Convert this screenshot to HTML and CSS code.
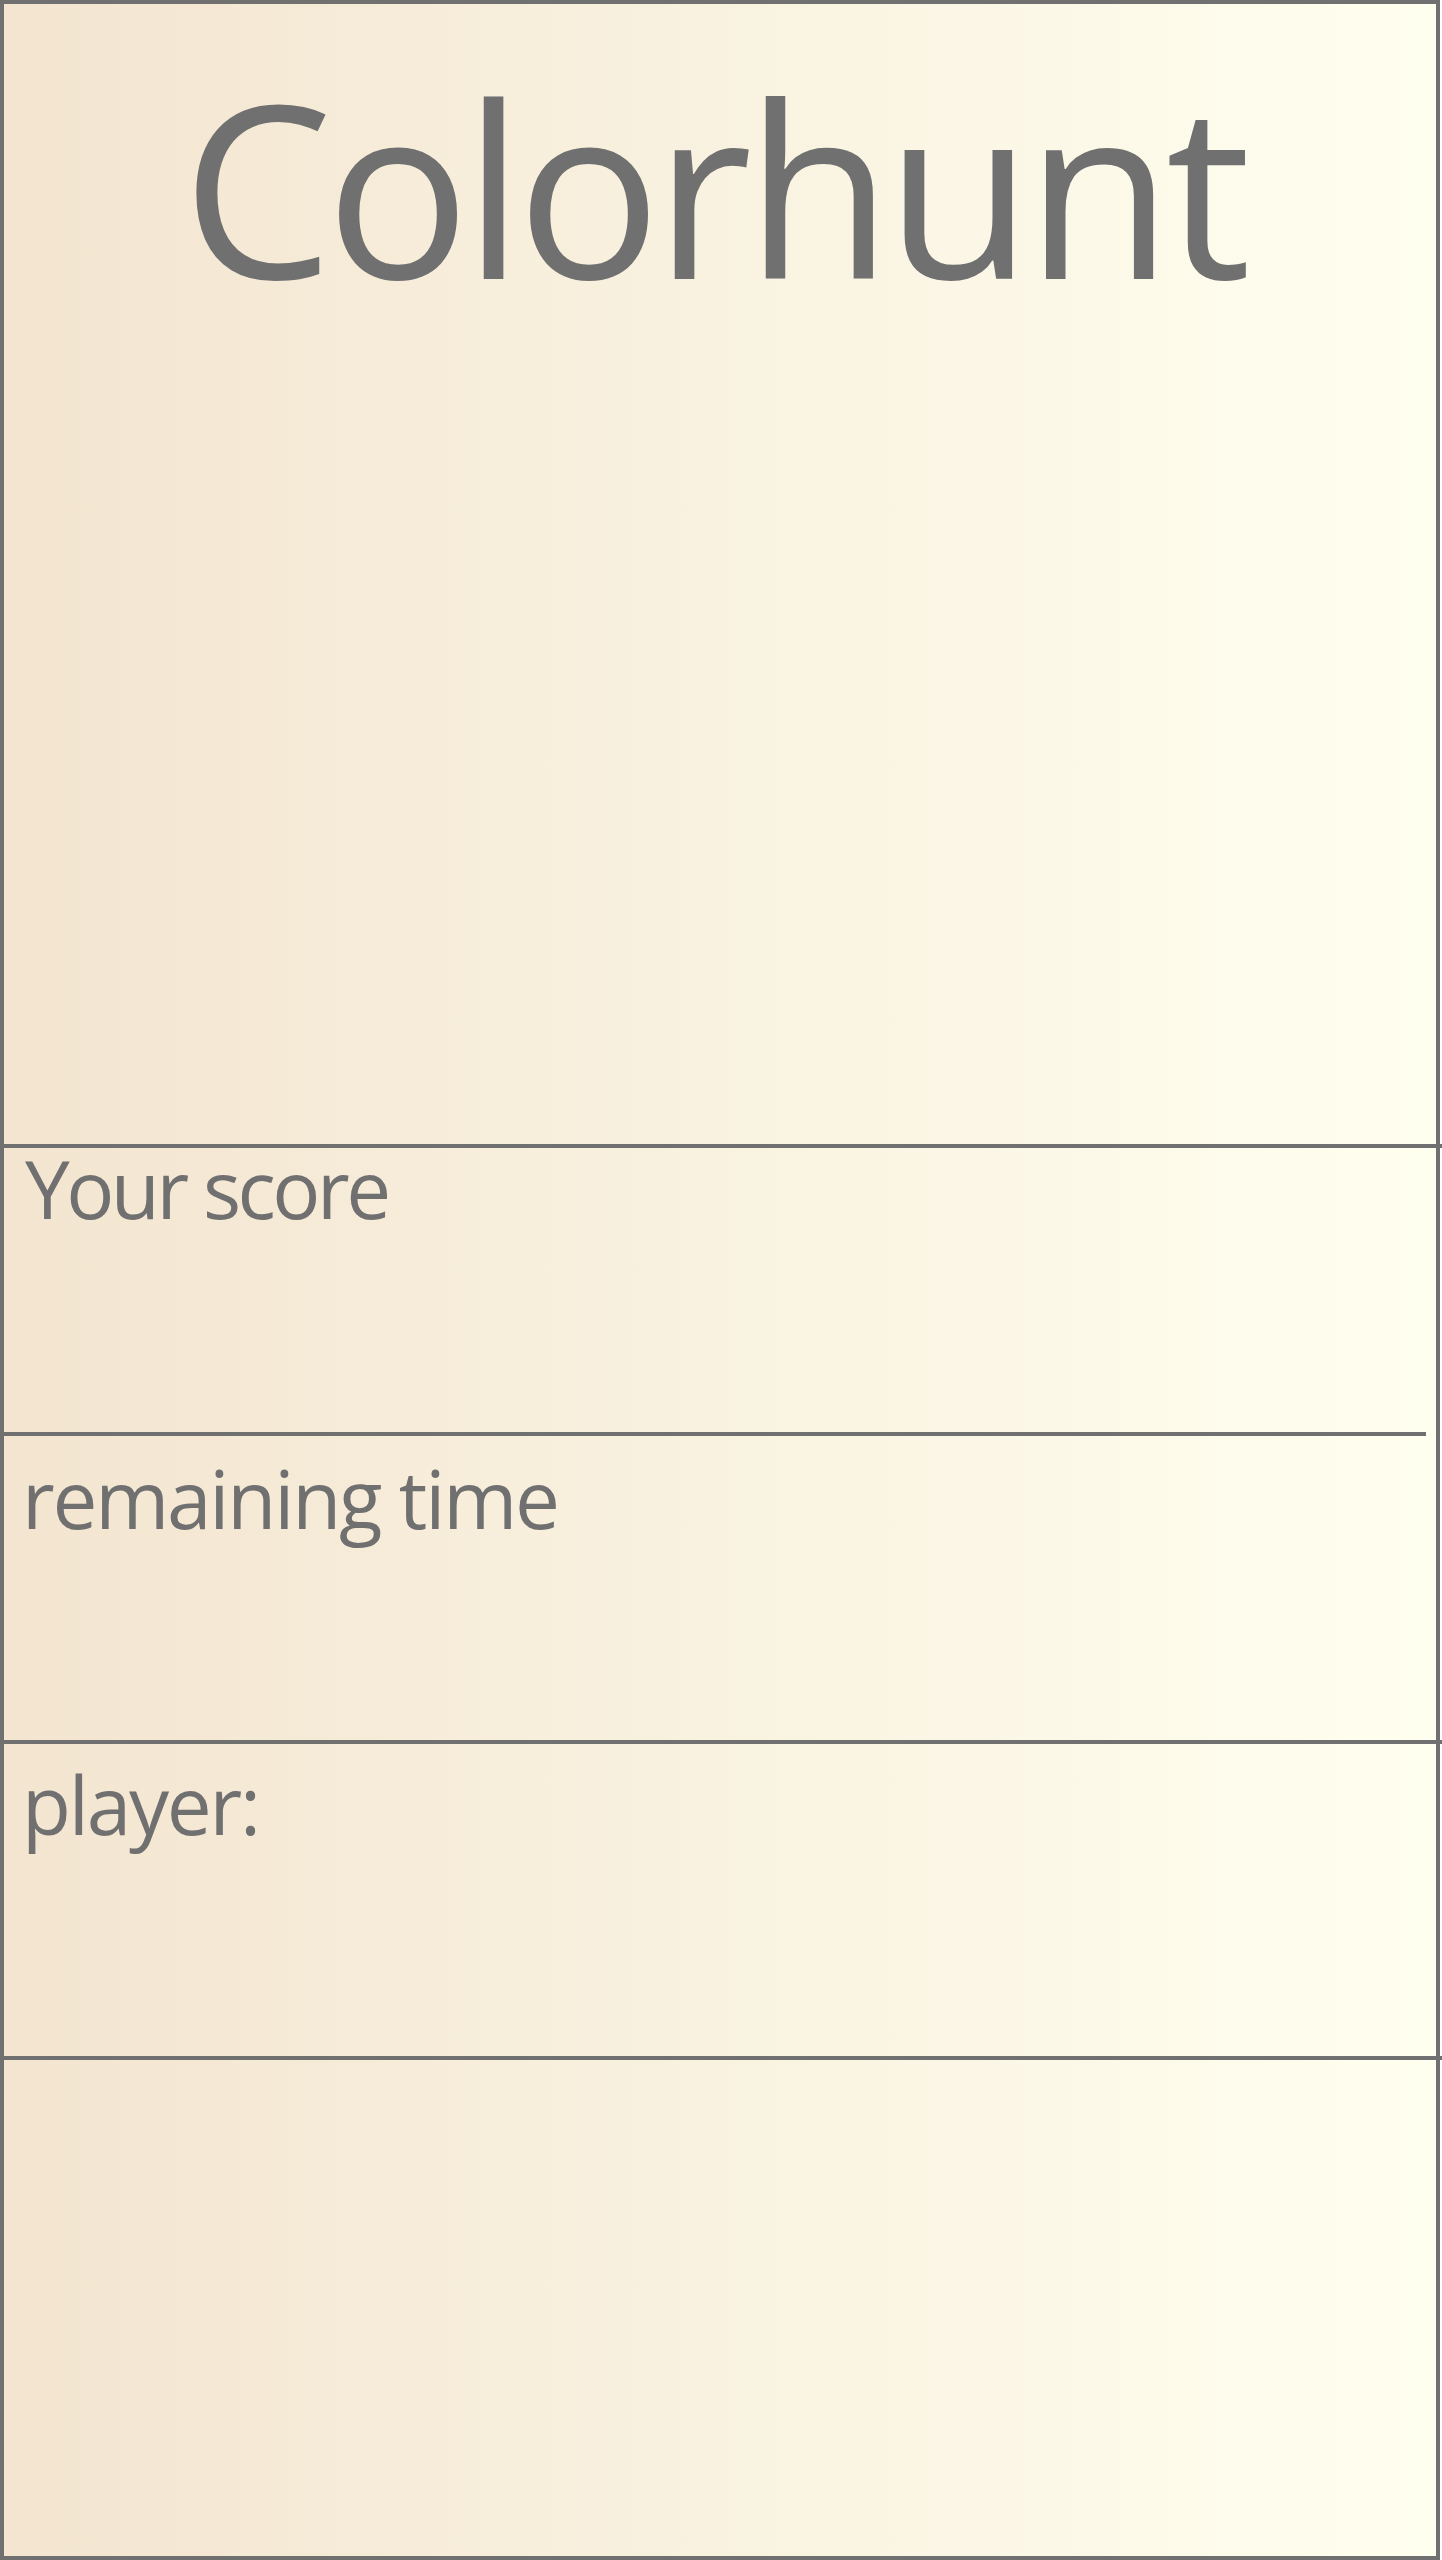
FILE: index.html
```html
<!DOCTYPE html>
<html lang="en">
<head>
<meta charset="utf-8">
<title>Colorhunt</title>
<link rel="stylesheet" href="styles.css">
</head>
<body>
<div class="game">
  <header class="title-area">
    <h1 class="title">Colorhunt</h1>
  </header>
  <section class="panel panel-score"><div class="label label-score">Your score</div></section>
  <section class="panel panel-time"><div class="label">remaining time</div></section>
  <section class="panel panel-player"><div class="label">player:</div></section>
  <section class="panel panel-rest"></section>
</div>
</body>
</html>
```
FILE: styles.css
```css
html, body {
  margin: 0;
  padding: 0;
}
body {
  font-family: "Open Sans", "Noto Sans", sans-serif;
  color: #707070;
}
.game {
  box-sizing: border-box;
  width: 1440px;
  height: 2560px;
  border: 4px solid #707070;
  background: linear-gradient(to right, #f3e5d0, #fffff0);
  display: flex;
  flex-direction: column;
}
.title-area {
  box-sizing: border-box;
  width: 1438px;
  height: 1144px;
  border-bottom: 4px solid #707070;
  flex: none;
}
.title {
  box-sizing: border-box;
  margin: 0;
  font-weight: 400;
  font-size: 240px;
  line-height: 1;
  text-align: center;
  width: 1432px;
  padding-top: 62px;
  padding-right: 14px;
  letter-spacing: -7px;
}
.panel {
  box-sizing: border-box;
  flex: none;
  border-bottom: 4px solid #707070;
  padding-left: 18px;
}
.label {
  font-size: 80px;
  line-height: 1;
  letter-spacing: -2.2px;
}
.label-score {
  letter-spacing: -3.5px;
  padding-left: 3px;
}
.panel-score {
  width: 1422px;
  height: 288px;
  padding-top: 0;
}
.panel-time {
  width: 1438px;
  height: 308px;
  padding-top: 22px;
}
.panel-player {
  width: 1438px;
  height: 316px;
  padding-top: 20px;
}
.panel-rest {
  border-bottom: none;
  flex: 1;
}
```
